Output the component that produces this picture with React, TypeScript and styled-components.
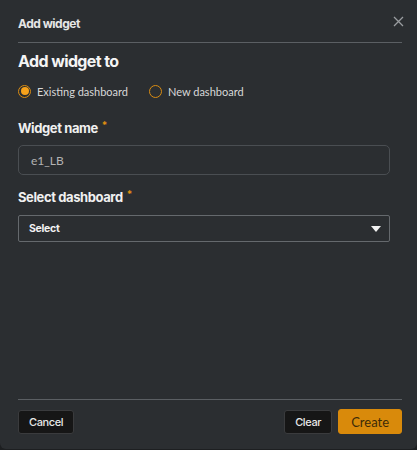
import React from 'react';
import styled, { createGlobalStyle } from 'styled-components';

const GlobalStyle = createGlobalStyle`
  html, body {
    margin: 0;
    padding: 0;
    background: #1d1f21;
  }
  * { box-sizing: border-box; }
`;

const Dialog = styled.div`
  width: 417px;
  height: 449px;
  background: #2b2e31;
  border-radius: 0 0 6px 6px;
  display: flex;
  flex-direction: column;
  padding: 0 15px 15px 18px;
  font-family: Inter, "Noto Sans", sans-serif;
  color: #f2f2f2;
`;

const Header = styled.div`
  display: flex;
  align-items: center;
  justify-content: space-between;
  height: 43px;
  padding-top: 5px;
  border-bottom: 1px solid #5b5f63;
`;

const HeaderTitle = styled.div`
  font-size: 12px;
  font-weight: 700;
  letter-spacing: -0.5px;
  color: #e6e6e6;
`;

const CloseButton = styled.button`
  background: none;
  border: none;
  padding: 0;
  margin-right: -3px;
  margin-top: -4px;
  width: 14px;
  height: 14px;
  display: flex;
  align-items: center;
  justify-content: center;
  cursor: pointer;
`;

const Body = styled.div`
  flex: 1;
  display: flex;
  flex-direction: column;
  padding-right: 12px;
`;

const SectionTitle = styled.h2`
  margin: 7px 0 0;
  font-size: 16px;
  font-weight: 700;
  letter-spacing: -0.6px;
  line-height: 22px;
  color: #f5f5f5;
`;

const RadioRow = styled.div`
  display: flex;
  gap: 21px;
  margin-top: 11px;
  height: 16px;
  align-items: center;
`;

const RadioOption = styled.label`
  display: flex;
  align-items: center;
  gap: 6px;
  font-family: Lato, "Noto Sans", sans-serif;
  font-size: 11px;
  color: #d8d8d8;
  cursor: pointer;
`;

const RadioCircle = styled.span<{ $checked?: boolean }>`
  width: 13px;
  height: 13px;
  border-radius: 50%;
  border: 1.5px solid #d98c12;
  display: flex;
  align-items: center;
  justify-content: center;
  &::after {
    content: '';
    width: 8px;
    height: 8px;
    border-radius: 50%;
    background: ${p => (p.$checked ? '#f7a21b' : 'transparent')};
  }
`;

const FieldLabel = styled.div<{ $top: number }>`
  margin-top: ${p => p.$top}px;
  font-size: 13px;
  font-weight: 700;
  letter-spacing: -0.4px;
  color: #f0f0f0;
  display: flex;
  align-items: flex-start;
  gap: 4px;
  line-height: 18px;
`;

const Required = styled.span`
  color: #e0900f;
  font-size: 10px;
  line-height: 12px;
`;

const TextInput = styled.input`
  margin-top: 8px;
  height: 30px;
  width: 100%;
  background: #2b2e31;
  border: 1px solid #4a4e52;
  border-radius: 5px;
  padding: 0 12px;
  font-family: Lato, "Noto Sans", sans-serif;
  font-size: 12px;
  color: #b3b3b3;
  outline: none;
`;

const SelectBox = styled.div`
  margin-top: 9px;
  height: 27px;
  width: 100%;
  border: 1px solid #65696d;
  border-radius: 2px;
  display: flex;
  align-items: center;
  justify-content: space-between;
  padding: 0 8px 0 10px;
  font-size: 10.5px;
  font-weight: 700;
  letter-spacing: -0.3px;
  color: #f2f2f2;
`;

const Footer = styled.div`
  border-top: 1px solid #5b5f63;
  padding-top: 9px;
  display: flex;
  align-items: center;
  justify-content: space-between;
`;

const ButtonGroup = styled.div`
  display: flex;
  gap: 6px;
  align-items: center;
`;

const Button = styled.button<{ $primary?: boolean }>`
  height: ${p => (p.$primary ? 25 : 24)}px;
  min-width: ${p => (p.$primary ? 62 : 48)}px;
  padding: 0 ${p => (p.$primary ? 12 : 10)}px;
  border-radius: 3px;
  font-family: ${p => (p.$primary ? 'Lato, "Noto Sans", sans-serif' : 'Inter, "Noto Sans", sans-serif')};
  font-size: ${p => (p.$primary ? 13 : 11)}px;
  font-weight: ${p => (p.$primary ? 400 : 500)};
  letter-spacing: ${p => (p.$primary ? 0 : -0.4)}px;
  background: ${p => (p.$primary ? '#d98a0b' : '#161616')};
  color: ${p => (p.$primary ? '#3d2a08' : '#e8e8e8')};
  border: 1px solid ${p => (p.$primary ? '#d98a0b' : '#3a3b3d')};
  cursor: pointer;
`;

export default function App() {
  return (
    <>
      <GlobalStyle />
      <Dialog>
        <Header>
          <HeaderTitle>Add widget</HeaderTitle>
          <CloseButton aria-label="Close">
            <svg width="11" height="11" viewBox="0 0 11 11">
              <path d="M1 1L10 10M10 1L1 10" stroke="#9a9da0" strokeWidth="1.3" />
            </svg>
          </CloseButton>
        </Header>
        <Body>
          <SectionTitle>Add widget to</SectionTitle>
          <RadioRow>
            <RadioOption>
              <RadioCircle $checked />
              Existing dashboard
            </RadioOption>
            <RadioOption>
              <RadioCircle />
              New dashboard
            </RadioOption>
          </RadioRow>
          <FieldLabel $top={20}>
            Widget name <Required>*</Required>
          </FieldLabel>
          <TextInput defaultValue="e1_LB" />
          <FieldLabel $top={13}>
            Select dashboard <Required>*</Required>
          </FieldLabel>
          <SelectBox>
            Select
            <svg width="10" height="6" viewBox="0 0 10 6">
              <path d="M0 0H10L5 6Z" fill="#f2f2f2" />
            </svg>
          </SelectBox>
        </Body>
        <Footer>
          <Button>Cancel</Button>
          <ButtonGroup>
            <Button>Clear</Button>
            <Button $primary>Create</Button>
          </ButtonGroup>
        </Footer>
      </Dialog>
    </>
  );
}
